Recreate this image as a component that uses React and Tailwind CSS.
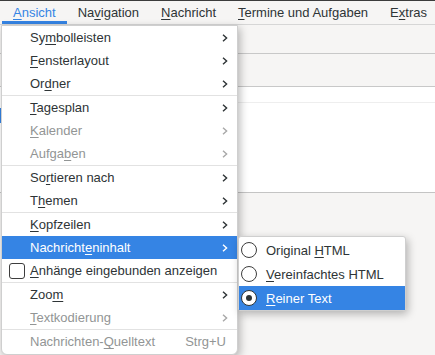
import React from 'react';

const U = ({ children }) => <span className="underline underline-offset-2 decoration-1">{children}</span>;

const Chevron = ({ color = '#2e3436' }) => (
  <svg width="6" height="8" viewBox="0 0 6 8" className="shrink-0">
    <path d="M1 0.8 L4.6 4 L1 7.2" fill="none" stroke={color} strokeWidth="1.4" />
  </svg>
);

const Sep = () => <div className="h-px bg-[#e2e2e2]" />;

const Item = ({ children, sub, disabled, active, accel, check }) => {
  const color = active ? 'text-white' : disabled ? 'text-[#929595]' : 'text-[#2e3436]';
  return (
    <div className={`h-[23px] flex items-center pr-[9px] ${active ? 'bg-[#3584e4]' : ''} ${color}`}>
      <div className="w-[28px] flex justify-center pl-[2px]">
        {check && <div className="w-[16px] h-[16px] rounded-[3px] border border-[#3d3d3d] bg-white" />}
      </div>
      <span className="flex-1 whitespace-nowrap">{children}</span>
      {sub && <Chevron color={active ? '#ffffff' : disabled ? '#a8a8a8' : '#2e3436'} />}
      {accel && <span className="mr-[2px]">{accel}</span>}
    </div>
  );
};

const Radio = ({ children, on }) => (
  <div className={`h-[24px] flex items-center gap-[9px] pl-[2px] ${on ? 'bg-[#3584e4] text-white' : 'text-[#2e3436]'}`}>
    <div className={`w-[16px] h-[16px] rounded-full border flex items-center justify-center ${on ? 'border-[#2e3436] bg-white' : 'border-[#3d3d3d] bg-white'}`}>
      {on && <div className="w-[6px] h-[6px] rounded-full bg-[#2e3436]" />}
    </div>
    <span className="whitespace-nowrap">{children}</span>
  </div>
);

const MenuTitle = ({ children, open }) => (
  <div className={`shrink-0 whitespace-nowrap px-[11px] flex items-center ${open ? 'text-[#3584e4] border-b-[3px] border-[#3584e4] pt-[3px]' : ''}`}>
    <span>{children}</span>
  </div>
);

export default function App() {
  return (
    <div className="relative w-[435px] h-[355px] overflow-hidden bg-[#f6f5f4] text-[13px] leading-none" style={{ fontFamily: '"Liberation Sans", Arial, sans-serif' }}>
      <div className="h-px bg-[#3c3c3c]" />
      <div className="h-[24px] flex items-stretch pl-[2px] border-b border-[#d6d6d6] text-[#2e3436]">
        <MenuTitle open><U>A</U>nsicht</MenuTitle>
        <MenuTitle>Na<U>v</U>igation</MenuTitle>
        <MenuTitle><U>N</U>achricht</MenuTitle>
        <MenuTitle><U>T</U>ermine und Aufgaben</MenuTitle>
        <MenuTitle>E<U>x</U>tras</MenuTitle>
      </div>
      <div className="h-[29px] border-b border-[#c8c8c8]" />
      <div className="h-[33px] border-b border-[#c8c8c8]" />
      <div className="h-[106px] bg-white border-b border-[#c4c4c4] flex">
        <div className="w-[2px] mt-[21px] h-[15px] bg-[#3584e4]" />
        <div className="flex-1 mt-[15px] h-px bg-[#eeeeee] self-start" />
      </div>

      <div className="absolute left-[1px] top-[25px] w-[237px] bg-white border border-[#cfcfcf] rounded-b-[6px] shadow-[2px_3px_8px_rgba(0,0,0,0.28)] pb-[1px]">
        <Item sub>Sy<U>m</U>bolleisten</Item>
        <Item sub><U>F</U>ensterlayout</Item>
        <Item sub>Or<U>d</U>ner</Item>
        <Sep />
        <Item sub><U>T</U>agesplan</Item>
        <Item sub disabled><U>K</U>alender</Item>
        <Item sub disabled>Aufga<U>b</U>en</Item>
        <Sep />
        <Item sub>So<U>r</U>tieren nach</Item>
        <Item sub>T<U>h</U>emen</Item>
        <Sep />
        <Item sub><U>K</U>opfzeilen</Item>
        <Item sub active>Nachricht<U>e</U>ninhalt</Item>
        <Item check><U>A</U>nhänge eingebunden anzeigen</Item>
        <Sep />
        <Item sub>Zoo<U>m</U></Item>
        <Item sub disabled><U>T</U>extkodierung</Item>
        <Sep />
        <Item disabled accel="Strg+U">Nachrichten-<U>Q</U>uelltext</Item>
      </div>

      <div className="absolute left-[238px] top-[236px] w-[168px] bg-white border border-[#cfcfcf] rounded-[3px] shadow-[2px_3px_8px_rgba(0,0,0,0.28)] pt-px">
        <Radio>Original <U>H</U>TML</Radio>
        <Radio><U>V</U>ereinfachtes HTML</Radio>
        <Radio on><U>R</U>einer Text</Radio>
      </div>
    </div>
  );
}
